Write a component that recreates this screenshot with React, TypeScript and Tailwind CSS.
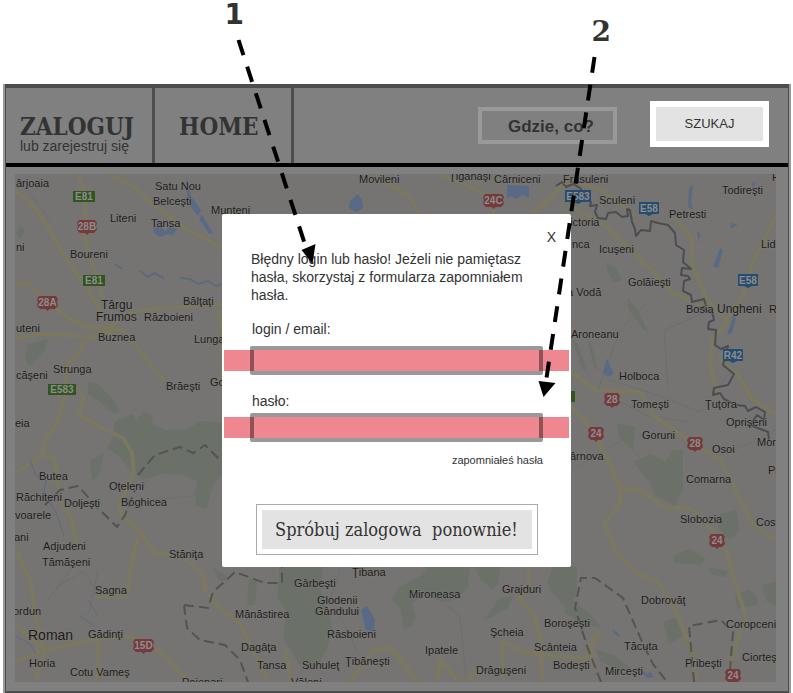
import React from "react";

type Label = [number, number, string, number?];

const labels: Label[] = [
  [16, 187, "ârjoaia"], [155, 190, "Satu Nou"], [153, 205, "Belceşti"], [110, 222, "Liteni"],
  [151, 227, "Tansa"], [211, 214, "Munteni"], [16, 251, "ni"], [70, 258, "Boureni"],
  [183, 305, "Bălţaţi"], [101, 309, "Târgu", 12], [96, 321, "Frumos", 12], [144, 321, "Războieni"],
  [98, 341, "Buznea"], [16, 332, "uteni"], [194, 343, "Lungani"], [53, 373, "Strunga"],
  [210, 386, "Gol"], [16, 379, "căşeni"], [166, 390, "Brăeşti"], [15, 427, "eia"],
  [39, 480, "Butea"], [109, 490, "Oţeleni"], [16, 501, "Răchiteni"], [64, 507, "Doljeşti"],
  [121, 506, "Boghicea"], [15, 519, "voarele"], [14, 541, "ani"], [43, 550, "Adjudeni"],
  [42, 566, "Tămăşeni"], [169, 558, "Stăniţa"], [95, 594, "Sagna"], [13, 615, "ordun"],
  [28, 640, "Roman", 14], [88, 638, "Gădinţi"], [29, 667, "Horia"], [70, 676, "Cotu Vameş"],
  [182, 686, "Poienari"], [352, 576, "Ţibana"], [294, 587, "Gârbeşti"], [317, 604, "Glodenii"],
  [315, 615, "Gândului"], [409, 598, "Mironeasa"], [502, 593, "Grajduri"], [235, 618, "Mănăstirea"],
  [327, 638, "Răsboieni"], [544, 627, "Boroşeşti"], [490, 636, "Şcheia"], [241, 651, "Dagâţa"],
  [425, 654, "Ipatele"], [534, 651, "Scânteia"], [257, 669, "Tansa"], [302, 669, "Suhuleţ"],
  [345, 665, "Ţibăneşti"], [476, 674, "Drăguşeni"], [553, 669, "Bodeşti"], [291, 686, "Văleni"],
  [359, 183, "Movileni"], [449, 180, "Ţiganaşi"], [494, 183, "Cârniceni"], [563, 183, "Frăsuleni"],
  [722, 194, "Todireşti"], [772, 181, "F"], [599, 204, "Sculeni"], [669, 218, "Petresti"],
  [563, 226, "Victoria"], [572, 248, "nca"], [599, 253, "Icuşeni"], [761, 248, "Lideni"],
  [628, 286, "Golăieşti"], [567, 296, "a Vodă"], [686, 313, "Bosia"], [717, 313, "Ungheni", 12],
  [769, 313, "R"], [571, 338, "Aroneanu"], [619, 380, "Holboca"], [631, 408, "Tomeşti"],
  [705, 408, "Ţuţora"], [726, 426, "Oprişeni"], [642, 439, "Goruni"], [712, 453, "Osoi"],
  [757, 446, "Moreni"], [570, 460, "ârnova"], [768, 474, "Pr"], [686, 483, "Comarna"],
  [680, 523, "Slobozia"], [756, 526, "Costuleni"], [641, 604, "Dobrovăţ"], [726, 628, "Coropceni"],
  [624, 650, "Tăcuta"], [742, 661, "Ciorteşti"], [685, 667, "Pribeşti"], [605, 675, "Mirceşti"],
];

type Shield = [number, number, number, string, "green" | "red" | "blue"];

const shields: Shield[] = [
  [73, 191, 22, "E81", "green"], [83, 275, 22, "E81", "green"], [48, 384, 28, "E583", "green"],
  [566, 391, 9, "", "green"], [77, 220, 20, "28B", "red"], [37, 296, 21, "28A", "red"],
  [133, 639, 21, "15D", "red"], [483, 194, 21, "24C", "red"], [604, 393, 16, "28", "red"],
  [588, 427, 16, "24", "red"], [687, 437, 16, "28", "red"], [709, 534, 16, "24", "red"],
  [725, 669, 16, "24", "red"], [565, 190, 26, "E583", "blue"], [639, 202, 20, "E58", "blue"],
  [738, 274, 20, "E58", "blue"], [723, 349, 20, "R42", "blue"],
];

const shieldColor = { green: "#30551f", red: "#743a3c", blue: "#264c70" };

const forests = [
  "M135 422l8-10 8 2 2 10 12 6 22-1 14-8 21 2v52l-8 8-8 26-11-4 2-24-16-6-20-1-18 6-14-12-10-12-12-8 8-16z",
  "M88 382l10 2 14 14 8 14-6 2-14-12-12-8z", "M114 422l18-8 8 12-6 12-20-4z", "M90 460l14-7-4 20-8 8z",
  "M28 344l20-5-4 13-14 14-5-6z", "M20 226l5 4-4 8-5-4z", "M279 567h44l-2 25 8 22 4 18-8 20-8 16-18-4-8-14-8-12 4-26-10-14 2-20z",
  "M249 578l8 3-2 24h-8z", "M398 588l22-12 12-12h38l-2 24-12 12-14 2-18-8-12 10 4 12-4 10-8 4-4-22-8-8z",
  "M475 567h25l-2 18-6 4-12-10z", "M553 567h24v30l-14 8-12-14-4-8z", "M484 620l14-20 16-6-6 14-14 8z",
  "M568 580l6 22 16 12 12 14-18-4-20-12z", "M596 649l18 6 18 14-12 2-20-10z", "M633 462l18-8 14 8 8-12h10v38l-8 18-20-10-4-12z",
  "M617 423l18 4-2 22-14-12z", "M674 555l16-6 16 10-6 6-26-2z", "M720 514l16-4 4 20-10 10-12-12z",
  "M735 595l14-6 8 8v8l-20 4zM762 585l14-4v24l-10-4z", "M663 622l14-4 6 18-14 8z", "M606 262l10 6 6 12-8 2-6-10z",
  "M628 298l10 12 10 22-6-4-14-20z", "M572 340l6 4 10 30-6-6zM590 340l8 30-4-4-6-24z", "M708 567l20 4-2 6-14-2z",
  "M225 575l-12-8 6 14h8z",
];

const waters = [
  "M187 178l4 18 10 14-3 6-8-10-5-20z", "M202 215l11 18-4 1-10-16z", "M153 226l8 1 4 4 5-4 7 2-4 6-5-1-8 3-6-4z",
  "M350 201l8-7 4 6 1 8-6 4-8-4z", "M507 185l22 1v12l-7-3-6 4-6-3-3 3z", "M361 610l6-4 8 14-1 12-8-2-3-12z",
  "M689 188l4-3-2 16 2 9-5-3z", "M751 184l4-3-1 6zM732 223l6 2-5 2 1 2-4-2z", "M720 248l3 2-5 18-5-2zM697 231l3 3-1 9z",
  "M733 316l3 2-4 15-5 2z", "M607 358l3 8 4 8-6 2-5-3 2-8z", "M604 370h8l-2 7-5-3z", "M641 670l6 4 3-2 4 5-6 1-6-5z", "M612 629l6 4 2 5-6-5z",
];

const roads = [
  "M78 174l7 20v42l4 20 8 20 7 26", "M16 190l22 22 12 18 15 28 20 27 18 30", "M108 174l22 10 20 18 35 26 37 20",
  "M16 284h12l22 19 18 15 20 9 22 1 10-10 20-8 30-2 52-4", "M16 338l29-4 45 3 30-8 14 14 22 28 10 10", "M83 340l-3 14-12 9-4 37-7 25-12 14-3 16-26 18",
  "M80 390l4 8-6 16 18 11 28 14 8 14 2 20-15 32 4 12 18 16 14 20 28 4 20 18 2 14 10 15 25 20 12 25 16 30",
  "M138 537l-6 23-5 36-31 2", "M42 455l12 3 6 42 12 20 4 25", "M15 548l15 32 7 42 8 28 45-10 40-4 30 15 30 32", "M15 625l30 25-10 32M98 640l-1 42M45 650l-30 12",
  "M218 310l4 22v50", "M375 174l20 14 14 8 12 20", "M440 174l32 14 28 11M493 206v12M568 180l-20 20-18 16", "M565 177l40 15 30 24",
  "M568 204l40 24 42 40 24 26 34 14", "M674 218l18 20v25l16 38 20 20-16 20-2 24 8 30", "M776 216l-24 48-8 30-16 24", "M718 358l20 17 15 25 23 14",
  "M568 370l28 20 44 2 14 24 35 24 32 20 16 34 16 30 20 16", "M568 404l20 20 22 40 10 24 22 3 22 16 28 2 20 20 14 22 8 28 12 38-8 22-12 42",
  "M620 488v16l-16 20 12 26 18 22 24 10 18 30 16 40 5 30", "M529 567v22l-10 10 16 18 6 24 1 41", "M502 640l1 40M502 640l20 12 32 4 32 2M594 635l-6 20-12 14",
  "M350 682l24-32 18-2 10 14 16 20M440 658l18 24M437 682l3-22M466 682l14-14", "M285 650l6 32M600 632l-10 16 4 20",
];

const borders = [
  "M138 475l17-20 25-8 13 6 12-8 17 17", "M45 505l15-15 18-4 22 24 17 17 8-12 10-25", "M184 605l3 23 13 12 25 5 15 15 8 22M184 605l24 3 5-16 22-20 30 11h17v-18",
  "M601 682l-14-36-12-38 6-30h14l28 20 20 46 10 20 22 28", "M694 682l-5-56 32-6 12 12-4 50",
];

const river =
  "M556 186L562 182L566 187L573 184L580 188L591 202L590 206L597 205L595 212L598 218L606 219L608 213L616 212L622 217L628 216L627 209L630 210L632 222L635 229L636 236L641 230L650 231L651 221L658 223L668 225L675 233L676 245L684 250L683 262L691 269L682 268L681 275L688 276L690 279L684 281L683 291L691 295L692 302L704 299L706 306L700 308L712 312L714 320L709 322L708 329L716 330L715 345L721 349L728 346L723 365L734 374L728 385L714 388L713 395L720 393L724 399L735 405L745 406L748 411L756 407L765 412L764 420L757 415L750 425L768 432L769 440";

function TownMap() {
  return (
    <svg viewBox="15 174 761 508" className="block h-auto w-full bg-[#757473]" role="img" aria-label="Mapa">
      {forests.map((d) => <path key={d} d={d} fill="#6b7169" />)}
      <g fill="none" stroke="#6e6d70" strokeWidth="1">
        <path d="M48 600l24-32 20-10M70 630l20-20 8-40M140 490l18-22 24-10 20 18-8 20-40 4M340 570l-10 30 16 26 12 28M440 600l20 16 6 62M590 360l20 20 50 16 40 16 30-40M650 300l-30 30-22 60M664 330l42-18" />
        <path d="M598 390l50 26 40 6M572 470l50-30 20 20M20 180l30 40M60 585l24-14 12 20M776 430l-46 22M664 330l4 56" />
      </g>
      <g fill="none" stroke="#7b785f" strokeWidth="4" strokeLinejoin="round">
        {roads.map((d) => <path key={d} d={d} />)}
      </g>
      {waters.map((d) => <path key={d} d={d} fill="#586a85" />)}
      <g fill="none" stroke="#5e6a7c" strokeWidth="2">
        <path d="M115 264l7 5M140 271l8 6 6-4 10 5M180 278l10 1 8 5 10-3 8 5 7-2" />
        <path d="M30 460l6 16 10 4-2 12 12 20 8 24M88 600l10 16M80 616l14 10M16 636l14 8 6 10" strokeWidth="1" />
      </g>
      <g fill="none" stroke="#55534f" strokeWidth="2" strokeDasharray="10 5">
        {borders.map((d) => <path key={d} d={d} />)}
      </g>
      <path d={river} fill="none" stroke="#4b4d51" strokeWidth="2" strokeLinejoin="round" />
      {shields.map(([x, y, w, text, kind]) => (
        <g key={`${x}-${y}`}>
          {kind === "green" && <rect x={x} y={y} width={w} height="11" fill={shieldColor.green} />}
          {kind === "red" && (
            <path d={`M${x + 2} ${y}h${w - 4}l2 3-1 3 1 4-3 3h-${w / 2 - 5}l-2 2-2-2h-${w / 2 - 5}l-3-3 1-4-1-3z`} fill={shieldColor.red} />
          )}
          {kind === "blue" && <path d={`M${x} ${y}h${w}v12h-${w / 2 - 4}l-4 2-4-2h-${w / 2 - 4}z`} fill={shieldColor.blue} />}
          <text x={x + w / 2} y={y + (kind === "green" ? 9 : 10)} textAnchor="middle" fontSize="10" fontWeight="bold" fill="#8d8d8b">
            {text}
          </text>
        </g>
      ))}
      <g fill="#1c1b1a" stroke="#7d7b79" strokeWidth="1" paintOrder="stroke">
        {labels.map(([x, y, text, size]) => (
          <text key={`${x}-${y}`} x={x} y={y} fontSize={size ?? 11}>{text}</text>
        ))}
      </g>
    </svg>
  );
}

function Field({ id, label, type, gap }: { id: string; label: string; type: string; gap: string }) {
  return (
    <div className={`flex flex-col ${gap}`}>
      <label htmlFor={id} className="px-[30px] leading-[18px]">{label}</label>
      <div className="grid items-center">
        <span className="col-start-1 row-start-1 mx-[2px] h-[21px] bg-[#ee8790]" />
        <input
          id={id}
          type={type}
          className="col-start-1 row-start-1 mx-[28px] h-[29px] rounded-[2px] border-4 border-black/40 bg-transparent px-2 outline-none"
        />
      </div>
    </div>
  );
}

function LoginDialog() {
  return (
    <section role="dialog" aria-label="Logowanie" className="w-[349px] rounded-[2px] bg-white pt-[14px] pb-[12px] text-[14px] text-[#333]">
      <div className="flex justify-end px-[15px]">
        <button type="button" aria-label="Zamknij" className="leading-[18px]">X</button>
      </div>
      <p className="mt-[4px] px-[29px] leading-[18px]">
        Błędny login lub hasło! Jeżeli nie pamiętasz hasła, skorzystaj z formularza zapomniałem hasła.
      </p>
      <form className="mt-[16px] flex flex-col" onSubmit={(e) => e.preventDefault()}>
        <Field id="login" label="login / email:" type="text" gap="gap-[8px]" />
        <div className="mt-[17px]">
          <Field id="haslo" label="hasło:" type="password" gap="gap-[3px]" />
        </div>
        <a href="#reset" className="mt-[10px] mr-[28px] self-end text-[11px] leading-[16px]">zapomniałeś hasła</a>
        <button
          type="submit"
          className="mt-[36px] h-[51px] w-[282px] self-center border border-[#aaa] p-[5px] font-['DejaVu_Serif_Condensed','DejaVu_Serif',serif] text-[18px]"
        >
          <span className="flex h-full items-center justify-center bg-[#e3e3e3] whitespace-pre">{"Spróbuj zalogowa  ponownie!"}</span>
        </button>
      </form>
    </section>
  );
}

function Header() {
  return (
    <header className="flex h-[83px] border-t-4 border-b-4 border-t-[#4d4d4d] border-b-black text-[#333]">
      <nav className="flex">
        <a href="#login" className="flex w-[149px] flex-col border-r-[3px] border-[#4d4d4d] pt-[27px] pl-[14px]">
          <span className="font-['DejaVu_Serif_Condensed','DejaVu_Serif',serif] text-[24px] leading-[24px] font-bold">ZALOGUJ</span>
          <span className="text-[14px] leading-[14px]">lub zarejestruj się</span>
        </a>
        <a href="#home" className="w-[139px] border-r-[3px] border-[#4d4d4d] pt-[27px] pl-[24px] font-['DejaVu_Serif_Condensed','DejaVu_Serif',serif] text-[24px] leading-[24px] font-bold">
          HOME
        </a>
      </nav>
      <form className="ml-auto flex items-start gap-[33px] pt-[13px] pr-[19px]" onSubmit={(e) => e.preventDefault()}>
        <input
          aria-label="Gdzie, co?"
          placeholder="Gdzie, co?"
          className="mt-[6px] h-[37px] w-[139px] border-4 border-[#999] bg-transparent pt-[2px] pl-[26px] text-[17px] font-bold outline-none placeholder:text-[#333]"
        />
        <button type="submit" className="h-[46px] w-[119px] border-[6px] border-white bg-[#e3e3e3] text-[13px]">SZUKAJ</button>
      </form>
    </header>
  );
}

function Annotations() {
  return (
    <div className="pointer-events-none absolute top-0 left-1/2 w-[793px] -translate-x-1/2">
      <svg viewBox="0 0 793 693" className="block h-[693px] w-[793px]">
        <g stroke="#000" strokeWidth="4" strokeDasharray="16 12">
          <path d="M238 40L305 246" />
          <path d="M594 57L546 378" />
        </g>
        <path d="M301 250L315 244L312 264Z" />
        <path d="M538 381L555 383L543 397Z" />
        <g fill="#333" fontWeight="bold" fontSize="28">
          <text x="224" y="24" fontFamily="DejaVu Sans, sans-serif">1</text>
          <text x="591" y="41" fontFamily="DejaVu Serif, serif">2</text>
        </g>
      </svg>
    </div>
  );
}

export default function App() {
  return (
    <main className="relative overflow-hidden bg-white pt-[84px] pr-[2px] pl-[3px] font-['Liberation_Sans',Arial,sans-serif]">
      <div className="border-x-2 border-[#999]">
        <div className="border-x border-b-2 border-[#4d4d4d] bg-[#808080]">
          <Header />
          <div className="pt-[7px] pr-[12px] pb-[9px] pl-[9px]">
            <TownMap />
          </div>
        </div>
      </div>
      <div className="absolute inset-x-0 top-[214px] flex justify-center">
        <LoginDialog />
      </div>
      <Annotations />
    </main>
  );
}
